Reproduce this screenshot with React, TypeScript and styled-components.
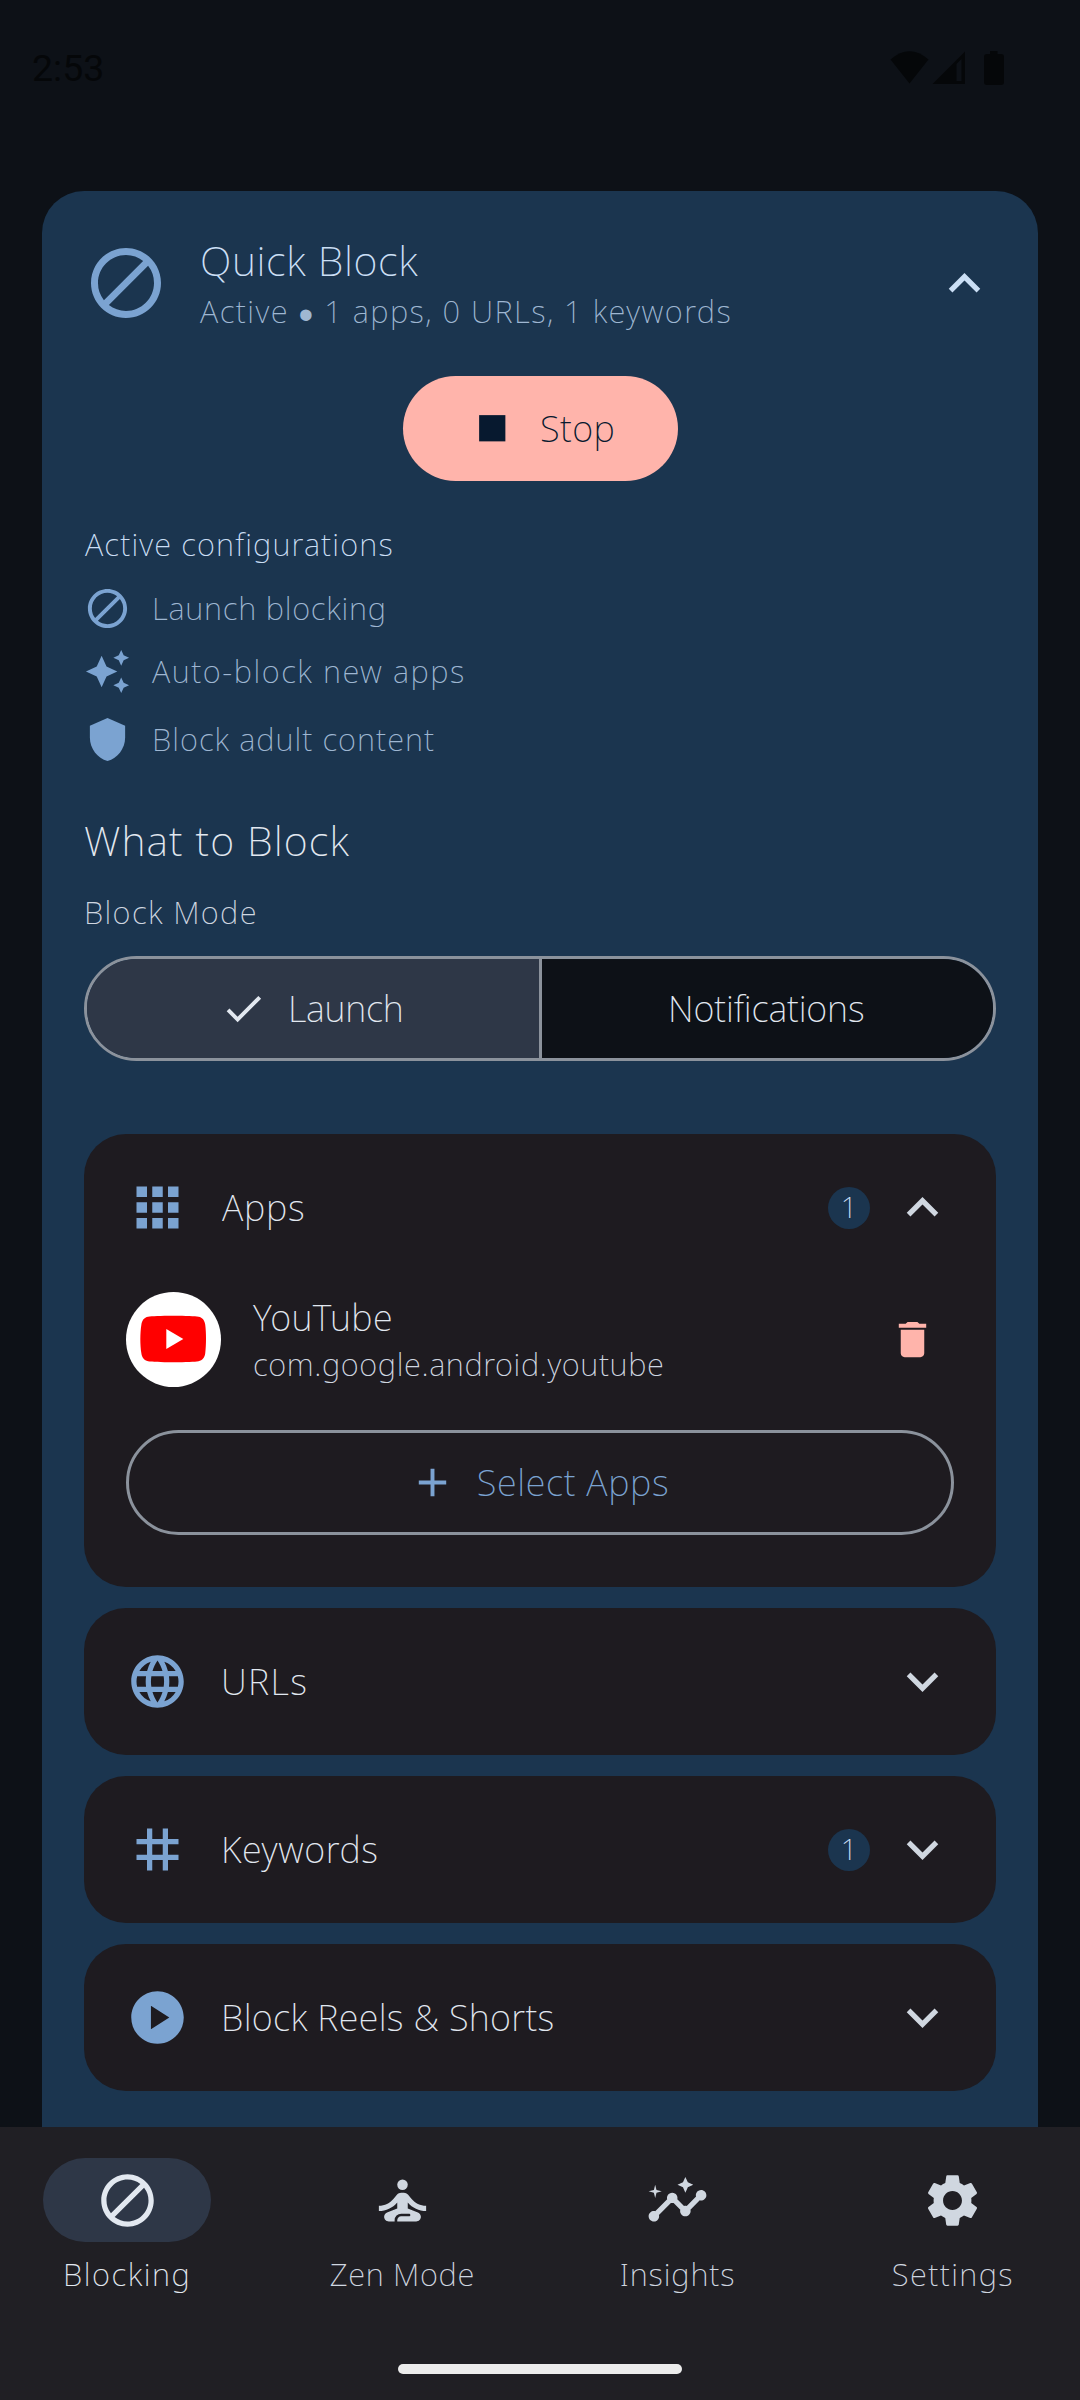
import React from "react";
import styled, { createGlobalStyle } from "styled-components";
import {
  MdAdd,
  MdApps,
  MdAutoAwesome,
  MdBlock,
  MdCheck,
  MdDelete,
  MdExpandLess,
  MdExpandMore,
  MdInsights,
  MdLanguage,
  MdPlayCircle,
  MdSelfImprovement,
  MdSettings,
  MdShield,
  MdStop,
  MdTag,
} from "react-icons/md";

const color = {
  background: "#0d1117",
  card: "#1b354f",
  panel: "#1e1b20",
  nav: "#201f24",
  accent: "#7ba3d1",
  onCard: "#cbdff5",
  onCardSoft: "#9fb7d2",
  text: "#e2e8f0",
  textSoft: "#d0d7e0",
  outline: "#8b929c",
  secondary: "#2e3747",
  danger: "#ffb4ab",
  onDanger: "#07192f",
};

const GlobalStyle = createGlobalStyle`
  * { box-sizing: border-box; }
  body {
    margin: 0;
    background: ${color.background};
    font-family: "Noto Sans", "Open Sans", sans-serif;
    font-weight: 200;
  }
  svg { display: block; flex: none; }
`;

const Screen = styled.div`
  width: 1080px;
  height: 2400px;
  display: flex;
  flex-direction: column;
  overflow: hidden;
  background: ${color.background};
`;

const StatusBar = styled.header`
  flex: none;
  height: 191px;
  padding: 41px 73px 0 32px;
  display: flex;
  justify-content: space-between;
  align-items: flex-start;
  color: #050709;
`;

const Clock = styled.span`
  font: 400 37.5px/55px Roboto, sans-serif;
`;

const StatusIcons = styled.svg`
  width: 117px;
  height: 36px;
  margin-top: 9px;
`;

const Content = styled.main`
  flex: 1;
  min-height: 0;
  padding: 0 42px;
  display: flex;
`;

const Card = styled.section`
  flex: 1;
  padding: 42px 42px 0;
  display: flex;
  flex-direction: column;
  background: ${color.card};
  border-radius: 42px 42px 0 0;
`;

const CardHeader = styled.div`
  display: flex;
  align-items: center;
  gap: 32px;
  height: 100px;
  color: ${color.accent};
`;

const HeaderText = styled.div`
  flex: 1;
  padding-top: 3px;
  display: flex;
  flex-direction: column;
`;

const Toggle = styled.span<{ $tone: string }>`
  color: ${(p) => p.$tone};
`;

const Title = styled.h1<{ $tone: string; $spacing: number }>`
  margin: 0;
  font-size: 41.2px;
  font-weight: 200;
  line-height: 52px;
  letter-spacing: ${(p) => p.$spacing}px;
  color: ${(p) => p.$tone};
  white-space: nowrap;
`;

const SectionTitle = styled(Title)`
  line-height: 56px;
`;

const Label = styled.span<{ $tone: string; $spacing: number }>`
  font-size: 36px;
  line-height: 48px;
  letter-spacing: ${(p) => p.$spacing}px;
  color: ${(p) => p.$tone};
  white-space: nowrap;
`;

const Caption = styled.span<{ $tone: string; $spacing: number }>`
  font-size: 30.9px;
  line-height: 42px;
  letter-spacing: ${(p) => p.$spacing}px;
  color: ${(p) => p.$tone};
  white-space: nowrap;
`;

const Subtitle = styled(Caption)`
  line-height: 50px;
`;

const Dot = styled.span`
  font-family: "DejaVu Sans", sans-serif;
  font-size: 42px;
  line-height: 0;
  vertical-align: -6px;
`;

const StopButton = styled.button`
  align-self: center;
  width: 275px;
  height: 105px;
  margin-top: 43px;
  padding: 0 0 0 63px;
  border: 0;
  border-radius: 53px;
  display: flex;
  align-items: center;
  gap: 22px;
  font: inherit;
  color: ${color.onDanger};
  background: ${color.danger};
`;

const ConfigHeading = styled(Caption)`
  margin: 42px 0 20px;
  padding-left: 1px;
`;

const ConfigRow = styled.div<{ $gap: number }>`
  display: flex;
  align-items: center;
  gap: 21px;
  height: 47px;
  margin-bottom: ${(p) => p.$gap}px;
  color: ${color.accent};
`;

const ConfigLabel = styled(Caption)`
  padding-bottom: 2px;
`;

const ModeCaption = styled(Caption)`
  margin: 23px 0 23px;
`;

const Segmented = styled.div`
  flex: none;
  display: flex;
  height: 105px;
  border: 3px solid ${color.outline};
  border-radius: 53px;
  overflow: hidden;
`;

const Segment = styled.button<{ $active?: boolean }>`
  flex: 1;
  border: 0;
  border-left: ${(p) => (p.$active ? "0" : `3px solid ${color.outline}`)};
  padding: 0 2px 0 0;
  display: flex;
  align-items: center;
  justify-content: center;
  gap: 21px;
  font: inherit;
  color: ${color.text};
  background: ${(p) => (p.$active ? color.secondary : color.background)};
`;

const Panels = styled.div`
  margin-top: 73px;
  display: flex;
  flex-direction: column;
  gap: 21px;
`;

const Panel = styled.section<{ $open?: boolean }>`
  padding: 42px 42px ${(p) => (p.$open ? 52 : 42)}px;
  border-radius: 42px;
  background: ${color.panel};
`;

const PanelHeader = styled.div`
  display: flex;
  align-items: center;
  gap: 21px;
  height: 63px;
  color: ${color.accent};
`;

const PanelTitle = styled(Label)<{ $inset?: number }>`
  flex: 1;
  padding-left: ${(p) => p.$inset ?? 11}px;
`;

const Badge = styled.span`
  width: 42px;
  height: 42px;
  padding-bottom: 2px;
  border-radius: 50%;
  display: flex;
  align-items: center;
  justify-content: center;
  font-size: 29px;
  line-height: 36px;
  color: ${color.onCard};
  background: ${color.card};
`;

const AppRow = styled.div`
  display: flex;
  align-items: center;
  height: 95px;
  margin-top: 53px;
  padding-right: 18px;
  color: ${color.danger};
`;

const AppIcon = styled.svg`
  width: 95px;
  height: 95px;
`;

const AppText = styled.div`
  flex: 1;
  padding: 2px 0 0 32px;
  display: flex;
  flex-direction: column;
`;

const PackageName = styled(Caption)`
  line-height: 45px;
`;

const OutlineButton = styled.button`
  width: 100%;
  height: 105px;
  margin-top: 43px;
  padding: 0 2px 0 0;
  border: 3px solid ${color.outline};
  border-radius: 53px;
  display: flex;
  align-items: center;
  justify-content: center;
  gap: 21px;
  font: inherit;
  color: ${color.accent};
  background: transparent;
`;

const NavBar = styled.nav`
  flex: none;
  height: 273px;
  padding-top: 31px;
  display: flex;
  flex-direction: column;
  justify-content: space-between;
  align-items: center;
  background: ${color.nav};
`;

const NavItems = styled.div`
  width: 100%;
  display: grid;
  grid-template-columns: repeat(4, 1fr);
  gap: 21px;
`;

const NavItem = styled.div`
  display: flex;
  flex-direction: column;
  align-items: center;
  gap: 11px;
`;

const NavPill = styled.span<{ $active?: boolean }>`
  width: 168px;
  height: 84px;
  border-radius: 42px;
  display: flex;
  align-items: center;
  justify-content: center;
  color: ${(p) => (p.$active ? color.text : color.textSoft)};
  background: ${(p) => (p.$active ? color.secondary : "transparent")};
`;

const HomeHandle = styled.div`
  width: 284px;
  height: 10px;
  margin-bottom: 26px;
  border-radius: 5px;
  background: #ececec;
`;

const configs = [
  { icon: MdBlock, label: "Launch blocking", spacing: 0.75, gap: 16 },
  { icon: MdAutoAwesome, label: "Auto-block new apps", spacing: 1.51, gap: 21 },
  { icon: MdShield, label: "Block adult content", spacing: 1.02, gap: 49 },
];

const closedPanels = [
  { icon: MdLanguage, label: "URLs", spacing: 1.3, count: 0 },
  { icon: MdTag, label: "Keywords", spacing: 0.6, count: 1 },
  { icon: MdPlayCircle, label: "Block Reels & Shorts", spacing: 0.32, count: 0 },
];

const tabs = [
  { icon: MdBlock, label: "Blocking", spacing: 1.55, active: true },
  { icon: MdSelfImprovement, label: "Zen Mode", spacing: 0.65, active: false },
  { icon: MdInsights, label: "Insights", spacing: 0.87, active: false },
  { icon: MdSettings, label: "Settings", spacing: 1.4, active: false },
];

export default function App() {
  return (
    <>
      <GlobalStyle />
      <Screen>
        <StatusBar>
          <Clock>2:53</Clock>
          <StatusIcons viewBox="0 0 117 36" fill="currentColor">
            <path d="M0.5 9.500Q19.500-7 38.500 9.500L19.500 33.500Z" />
            <path
              fillRule="evenodd"
              d="M42.500 34L75 1.500V34ZM66.500 31H71.500V9L66.500 14Z"
            />
            <path d="M100 1H107.500V4H111Q114 4 114 7V32Q114 35 111 35H97Q94 35 94 32V7Q94 4 97 4H100Z" />
          </StatusIcons>
        </StatusBar>

        <Content>
          <Card>
            <CardHeader>
              <MdBlock size={84} />
              <HeaderText>
                <Title $tone={color.onCard} $spacing={0.65}>Quick Block</Title>
                <Subtitle $tone={color.onCardSoft} $spacing={1.45}>
                  Active <Dot>•</Dot> 1 apps, 0 URLs, 1 keywords
                </Subtitle>
              </HeaderText>
              <Toggle $tone={color.onCard}>
                <MdExpandLess size={63} />
              </Toggle>
            </CardHeader>

            <StopButton>
              <MdStop size={52.5} />
              <Label $tone={color.onDanger} $spacing={0.4}>Stop</Label>
            </StopButton>

            <ConfigHeading $tone={color.onCard} $spacing={1.13}>
              Active configurations
            </ConfigHeading>
            {configs.map(({ icon: Icon, label, spacing, gap }) => (
              <ConfigRow key={label} $gap={gap}>
                <Icon size={47} />
                <ConfigLabel $tone={color.onCardSoft} $spacing={spacing}>{label}</ConfigLabel>
              </ConfigRow>
            ))}

            <SectionTitle $tone={color.text} $spacing={1.12}>What to Block</SectionTitle>
            <ModeCaption $tone={color.textSoft} $spacing={1.35}>Block Mode</ModeCaption>
            <Segmented>
              <Segment $active>
                <MdCheck size={47} />
                <Label $tone={color.text} $spacing={-0.25}>Launch</Label>
              </Segment>
              <Segment>
                <Label $tone={color.text} $spacing={-0.15}>Notifications</Label>
              </Segment>
            </Segmented>

            <Panels>
              <Panel $open>
                <PanelHeader>
                  <MdApps size={63} />
                  <PanelTitle $tone={color.text} $spacing={0.8} $inset={12}>Apps</PanelTitle>
                  <Badge>1</Badge>
                  <Toggle $tone={color.textSoft}>
                    <MdExpandLess size={63} />
                  </Toggle>
                </PanelHeader>
                <AppRow>
                  <AppIcon viewBox="0 0 95 95">
                    <circle cx="47.500" cy="47.500" r="47.500" fill="#fff" />
                    <path
                      d="M47.300 23.800C60 23.800 69 24.200 72.500 24.800C76.500 25.500 78.600 28.500 79.200 32.500C80.300 41 80.300 53 79.200 61.500C78.600 65.500 76.500 68.500 72.500 69.200C69 69.800 60 70.200 47.300 70.200C34.600 70.200 25.600 69.800 22.100 69.200C18.100 68.500 16 65.500 15.400 61.500C14 53 14 41 15.400 32.500C16 28.500 18.100 25.500 22.100 24.800C25.600 24.200 34.600 23.800 47.300 23.800Z"
                      fill="#f00"
                    />
                    <path d="M40.300 37L57.300 47L40.300 57Z" fill="#fff" />
                  </AppIcon>
                  <AppText>
                    <Label $tone={color.text} $spacing={0.38}>YouTube</Label>
                    <PackageName $tone={color.textSoft} $spacing={0.6}>
                      com.google.android.youtube
                    </PackageName>
                  </AppText>
                  <MdDelete size={47} />
                </AppRow>
                <OutlineButton>
                  <MdAdd size={47} />
                  <Label $tone={color.accent} $spacing={0.67}>Select Apps</Label>
                </OutlineButton>
              </Panel>

              {closedPanels.map(({ icon: Icon, label, spacing, count }) => (
                <Panel key={label}>
                  <PanelHeader>
                    <Icon size={63} />
                    <PanelTitle $tone={color.text} $spacing={spacing}>{label}</PanelTitle>
                    {count > 0 && <Badge>{count}</Badge>}
                    <Toggle $tone={color.textSoft}>
                      <MdExpandMore size={63} />
                    </Toggle>
                  </PanelHeader>
                </Panel>
              ))}
            </Panels>
          </Card>
        </Content>

        <NavBar>
          <NavItems>
            {tabs.map(({ icon: Icon, label, spacing, active }) => (
              <NavItem key={label}>
                <NavPill $active={active}>
                  <Icon size={63} />
                </NavPill>
                <Caption $tone={active ? color.text : color.textSoft} $spacing={spacing}>
                  {label}
                </Caption>
              </NavItem>
            ))}
          </NavItems>
          <HomeHandle />
        </NavBar>
      </Screen>
    </>
  );
}
